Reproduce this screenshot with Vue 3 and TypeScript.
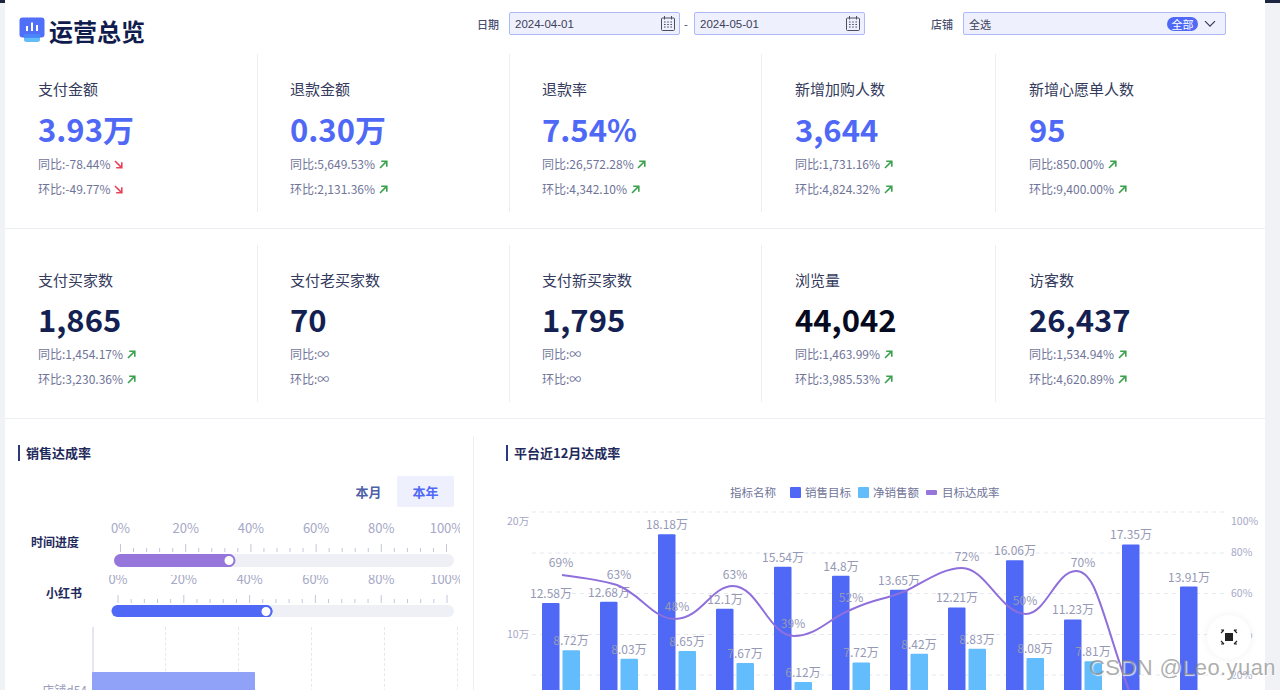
<script setup lang="ts">
interface Metric {
  title: string;
  value: string;
  yoy: string;
  mom: string;
  yoyDir?: "up" | "down";
  momDir?: "up" | "down";
  black?: boolean;
}

const rowOne: Metric[] = [
  { title: "支付金额", value: "3.93万", yoy: "-78.44%", mom: "-49.77%", yoyDir: "down", momDir: "down" },
  { title: "退款金额", value: "0.30万", yoy: "5,649.53%", mom: "2,131.36%", yoyDir: "up", momDir: "up" },
  { title: "退款率", value: "7.54%", yoy: "26,572.28%", mom: "4,342.10%", yoyDir: "up", momDir: "up" },
  { title: "新增加购人数", value: "3,644", yoy: "1,731.16%", mom: "4,824.32%", yoyDir: "up", momDir: "up" },
  { title: "新增心愿单人数", value: "95", yoy: "850.00%", mom: "9,400.00%", yoyDir: "up", momDir: "up" },
];

const rowTwo: Metric[] = [
  { title: "支付买家数", value: "1,865", yoy: "1,454.17%", mom: "3,230.36%", yoyDir: "up", momDir: "up" },
  { title: "支付老买家数", value: "70", yoy: "∞", mom: "∞" },
  { title: "支付新买家数", value: "1,795", yoy: "∞", mom: "∞" },
  { title: "浏览量", value: "44,042", yoy: "1,463.99%", mom: "3,985.53%", yoyDir: "up", momDir: "up", black: true },
  { title: "访客数", value: "26,437", yoy: "1,534.94%", mom: "4,620.89%", yoyDir: "up", momDir: "up" },
];

const rows = [rowOne, rowTwo];

// left gauges, coordinates are local to each svg
const gaugeLabels = ["0%", "20%", "40%", "60%", "80%", "100%"];
const gauges = [
  { name: "时间进度", cls: "gauge-time", x0: 20.5, step: 65.2, trackX: 14, fill: 121, knob: 129, color: "#9776dc", labelY: 13, tickY: 24, barY: 34, barH: 13, h: 48 },
  { name: "小红书", cls: "gauge-red", x0: 18, step: 65.8, trackX: 11.5, fill: 161, knob: 166, color: "#4f69f6", labelY: 9, tickY: 20, barY: 30, barH: 12, h: 42 },
];

function ticks(x0: number, step: number) {
  const out: { x: number; major: boolean }[] = [];
  for (let i = 0; i <= 25; i++) {
    out.push({ x: x0 + (i * step) / 5, major: i % 5 === 0 });
  }
  return out;
}

// right chart
const baseY = 756;
const perWan = 12.25;
const target = [12.58, 12.68, 18.18, 12.1, 15.54, 14.8, 13.65, 12.21, 16.06, 11.23, 17.35, 13.91];
const sales = [8.72, 8.03, 8.65, 7.67, 6.12, 7.72, 8.42, 8.83, 8.08, 7.81, 0, 0];
const groups = target.map((t, i) => {
  const x = 541 + i * 58;
  return { x, t, s: sales[i], ty: baseY - t * perWan, sy: baseY - sales[i] * perWan };
});
const gridY = [511, 552, 592.5, 633.5, 674];
const rates = [
  { t: "69%", x: 560, y: 566 },
  { t: "63%", x: 618, y: 578 },
  { t: "48%", x: 676, y: 610 },
  { t: "63%", x: 734, y: 578 },
  { t: "39%", x: 792, y: 627 },
  { t: "52%", x: 850, y: 601 },
  { t: "72%", x: 966, y: 560 },
  { t: "50%", x: 1024, y: 604 },
  { t: "70%", x: 1082, y: 566 },
];
const linePath =
  "M561,574 C585,577 603,580 616,584 C640,593 652,618 674,618 C700,618 710,585 732,585 C757,585 768,635 793,635 C815,635 828,618 847,610 C860,604 872,600 880,598 C888,596 897,593 905,590 C925,580 942,567 961,567 C985,567 1000,613 1025,613 C1045,613 1055,570 1075,570 C1095,570 1100,610 1128,690 L1140,730";
</script>

<template>
  <div class="page">
    <i class="corner corner-left"></i>
    <i class="corner corner-right"></i>

    <header class="topbar">
      <div class="brand">
        <svg class="brand-icon" width="26" height="26" viewBox="0 0 26 26">
          <rect x="5" y="14" width="16" height="11" rx="2.5" fill="#63bcfb" />
          <rect x="0.5" y="0.5" width="25" height="20" rx="3" fill="#4f6ff8" />
          <rect x="5" y="17" width="16" height="3.5" fill="#4a86f8" />
          <rect x="7" y="9" width="2" height="5" fill="#fff" />
          <rect x="12" y="5.5" width="2" height="8.5" fill="#fff" />
          <rect x="17" y="8" width="2" height="6" fill="#fff" />
        </svg>
        <span>运营总览</span>
      </div>

      <div class="filter date-filter">
        <label>日期</label>
        <div class="field date-field" v-for="(d, i) in ['2024-04-01', '2024-05-01']" :key="d" :class="{ second: i === 1 }">
          <span>{{ d }}</span>
          <svg width="14" height="15" viewBox="0 0 14 15" fill="none" stroke="#4a4f5e">
            <rect x="0.5" y="2" width="13" height="12.5" rx="1" />
            <path d="M3.5 0v3.5M10.5 0v3.5" />
            <path d="M3 6h1.6M6.2 6h1.6M9.4 6h1.6M3 8.5h1.6M6.2 8.5h1.6M9.4 8.5h1.6M3 11h1.6M6.2 11h1.6M9.4 11h1.6" stroke-width="1.2" />
          </svg>
        </div>
      </div>

      <div class="filter shop-filter">
        <label>店铺</label>
        <div class="field shop-field">
          <span class="shop-value">全选</span>
          <span class="tag">全部</span>
          <svg width="12" height="8" viewBox="0 0 12 8" fill="none" stroke="#333a5c" stroke-width="1.2">
            <path d="M1 1.2l5 5 5-5" />
          </svg>
        </div>
      </div>
    </header>

    <section v-for="(row, r) in rows" :key="r" class="metrics" :class="r === 0 ? 'metrics-one' : 'metrics-two'">
      <div v-for="m in row" :key="m.title" class="metric">
        <div class="metric-title">{{ m.title }}</div>
        <div class="metric-value" :class="{ blackish: m.black }">{{ m.value }}</div>
        <div class="metric-sub">
          同比:{{ m.yoy }}
          <svg v-if="m.yoyDir" class="arrow" :class="m.yoyDir" width="9" height="9" viewBox="0 0 9 9" fill="none" stroke-width="1.6">
            <path v-if="m.yoyDir === 'up'" d="M1 8L7.6 1.4M2.2 1.2h5.6v5.6" />
            <path v-else d="M1 1l6.6 6.6M2.2 7.8h5.6V2.2" />
          </svg>
        </div>
        <div class="metric-sub">
          环比:{{ m.mom }}
          <svg v-if="m.momDir" class="arrow" :class="m.momDir" width="9" height="9" viewBox="0 0 9 9" fill="none" stroke-width="1.6">
            <path v-if="m.momDir === 'up'" d="M1 8L7.6 1.4M2.2 1.2h5.6v5.6" />
            <path v-else d="M1 1l6.6 6.6M2.2 7.8h5.6V2.2" />
          </svg>
        </div>
      </div>
    </section>

    <section class="bottom">
      <div class="panel-left">
        <h3 class="panel-title">销售达成率</h3>
        <div class="tabs">
          <span class="tab">本月</span>
          <span class="tab active">本年</span>
        </div>

        <div v-for="g in gauges" :key="g.name" class="gauge" :class="g.cls">
          <span class="gauge-name">{{ g.name }}</span>
          <svg width="360" :height="g.h">
            <text v-for="(l, i) in gaugeLabels" :key="l" :x="g.x0 + i * g.step" :y="g.labelY" text-anchor="middle" class="gauge-label">{{ l }}</text>
            <line
              v-for="t in ticks(g.x0, g.step)"
              :key="t.x"
              :x1="t.x"
              :x2="t.x"
              :y1="t.major ? g.tickY : g.tickY + 4"
              :y2="g.tickY + 8"
              stroke="#c4c6d8"
            />
            <rect :x="g.trackX" :y="g.barY" :width="354 - g.trackX" :height="g.barH" :rx="g.barH / 2" fill="#eff0f5" />
            <rect :x="g.trackX" :y="g.barY" :width="g.fill" :height="g.barH" :rx="g.barH / 2" :fill="g.color" />
            <circle :cx="g.knob" :cy="g.barY + 6.5" r="5.5" fill="#fff" :stroke="g.color" stroke-width="2" />
          </svg>
        </div>

        <div class="rank">
          <i v-for="n in 5" :key="n" class="rank-grid"></i>
          <div class="rank-row">
            <span class="rank-name">店铺d54</span>
            <span class="rank-bar"></span>
          </div>
        </div>
      </div>

      <div class="panel-right">
        <h3 class="panel-title">平台近12月达成率</h3>
        <svg class="combo" width="792" height="255" viewBox="473 435 792 255">
          <text x="729" y="496" class="legend">指标名称</text>
          <rect x="789" y="486" width="11" height="11" rx="1" fill="#4f69f6" />
          <text x="804" y="496" class="legend">销售目标</text>
          <rect x="857" y="486" width="11" height="11" rx="1" fill="#63bcfb" />
          <text x="872" y="496" class="legend">净销售额</text>
          <rect x="925" y="489" width="11" height="5" rx="1" fill="#9776dc" />
          <text x="941" y="496" class="legend">目标达成率</text>

          <line v-for="y in gridY" :key="y" x1="531" x2="1226" :y1="y" :y2="y" stroke="#e6e8f0" stroke-dasharray="4 4" />

          <text x="506" y="524" class="axis">20万</text>
          <text x="506" y="637" class="axis">10万</text>
          <text x="1230" y="524" class="axis">100%</text>
          <text x="1230" y="555" class="axis">80%</text>
          <text x="1230" y="596" class="axis">60%</text>
          <text x="1230" y="637" class="axis">40%</text>
          <text x="1230" y="678" class="axis">20%</text>

          <g v-for="g in groups" :key="g.x">
            <rect :x="g.x" :y="g.ty" width="17.5" :height="baseY - g.ty" rx="1" fill="#4f69f6" />
            <rect v-if="g.s" :x="g.x + 20.5" :y="g.sy" width="17.5" :height="baseY - g.sy" rx="1" fill="#63bcfb" />
            <text :x="g.x + 9" :y="g.ty - 5" text-anchor="middle" class="bar-label">{{ g.t }}万</text>
            <text v-if="g.s" :x="g.x + 29" :y="g.sy - 5" text-anchor="middle" class="bar-label">{{ g.s }}万</text>
          </g>

          <path :d="linePath" fill="none" stroke="#8f6fdc" stroke-width="2" />
          <text v-for="p in rates" :key="p.t + p.x" :x="p.x" :y="p.y" text-anchor="middle" class="bar-label">{{ p.t }}</text>
        </svg>
      </div>
    </section>

    <button class="float-btn" type="button">
      <svg width="18" height="18" viewBox="0 0 18 18" fill="none" stroke="#222" stroke-width="1.2">
        <rect x="5" y="5" width="8" height="8" fill="#222" stroke="none" />
        <path d="M1 5l3-3M1 2h3M17 5l-3-3M17 2h-3M1 13l3 3M1 16h3M17 13l-3 3M17 16h-3" />
      </svg>
    </button>
    <div class="watermark">CSDN @Leo.yuan</div>
  </div>
</template>

<style>
html,
body {
  margin: 0;
  background: #f1f2f6;
}
</style>

<style scoped>
.page {
  position: relative;
  box-sizing: border-box;
  width: 1280px;
  height: 690px;
  overflow: hidden;
  margin: 0;
  padding: 0 15px 0 5px;
  background: #f1f2f6;
  font-family: "Noto Sans CJK SC", "Noto Sans", sans-serif;
  color: #333a5c;
}

.corner {
  position: absolute;
  top: 0;
  height: 3px;
  background: #1d2540;
}
.corner-left {
  left: 0;
  width: 5px;
}
.corner-right {
  right: 0;
  width: 15px;
}

.topbar {
  display: flex;
  align-items: flex-start;
  height: 54px;
  background: #fff;
}

.brand {
  display: flex;
  align-items: center;
  width: 472px;
  height: 26px;
  margin-top: 17px;
  padding-left: 14px;
  box-sizing: border-box;
  font-size: 24px;
  font-weight: 700;
  color: #111c4e;
}
.brand-icon {
  margin-right: 4px;
}

.filter {
  display: flex;
  align-items: center;
  margin-top: 12px;
  height: 23px;
}
.filter label {
  font-size: 11px;
  font-weight: 500;
  color: #4a4f72;
  margin-right: 10px;
}

.field {
  display: flex;
  align-items: center;
  box-sizing: border-box;
  height: 23px;
  background: #eef0fd;
  border: 1px solid #adb9f9;
  border-radius: 2px;
  font-size: 11.5px;
  color: #3c4058;
}

.date-field {
  justify-content: space-between;
  width: 171px;
  padding: 0 4px 0 5px;
  font-family: "Liberation Sans", sans-serif;
}
.date-field.second {
  margin-left: 14px;
  position: relative;
}
.date-field.second::before {
  content: "-";
  position: absolute;
  left: -11px;
  color: #4a4f72;
}

.shop-filter {
  margin-left: 66px;
}
.shop-field {
  width: 263px;
  padding: 0 9px 0 5px;
}
.shop-value {
  flex: 1;
  font-size: 11px;
}
.tag {
  width: 31px;
  height: 14px;
  line-height: 14px;
  border-radius: 7px;
  background: #4f69f6;
  color: #fff;
  font-size: 11px;
  text-align: center;
  margin-right: 6px;
}

.metrics {
  display: grid;
  grid-template-columns: 253px 252px 252px 234px 1fr;
  background: #fff;
  border-bottom: 1px solid #eceef4;
  padding-bottom: 16px;
}
.metrics-two {
  padding-top: 16px;
}

.metric {
  box-sizing: border-box;
  height: 158px;
  padding: 25px 0 0 33px;
  border-right: 1px solid #eceef4;
}
.metrics-two .metric {
  height: 157px;
}
.metric:nth-child(2),
.metric:nth-child(3) {
  padding-left: 32px;
}
.metric:last-child {
  border-right: none;
}

.metric-title {
  height: 20px;
  line-height: 20px;
  font-size: 15px;
  color: #333a5c;
}
.metric-value {
  height: 44px;
  line-height: 44px;
  margin-top: 8px;
  font-size: 31px;
  font-weight: 700;
  color: #4f69f6;
}
.metrics-two .metric-value {
  color: #141f52;
  margin-top: 7px;
}
.metrics-two .metric-value.blackish {
  color: #050a20;
}
.metric-sub {
  height: 25px;
  line-height: 25px;
  font-size: 12px;
  color: #6f7499;
  white-space: nowrap;
}
.arrow {
  margin-left: 1px;
}
.arrow.up {
  stroke: #3aa14c;
}
.arrow.down {
  stroke: #e8425a;
}

.bottom {
  display: flex;
  height: 271px;
  background: #fff;
}

.panel-left {
  position: relative;
  box-sizing: border-box;
  width: 469px;
  margin-top: 17px;
  border-right: 1px solid #eeeff5;
  padding-left: 13px;
}
.panel-right {
  position: relative;
  flex: 1;
  margin-top: 17px;
  padding-left: 32px;
}

.panel-title {
  margin: 9px 0 0;
  height: 16px;
  line-height: 16px;
  padding-left: 6px;
  border-left: 2px solid #2b3a80;
  font-size: 13px;
  font-weight: 700;
  color: #1f2a5c;
}

.tabs {
  display: flex;
  justify-content: flex-end;
  align-items: center;
  margin: 15px 19px 0 0;
  height: 31px;
}
.tab {
  box-sizing: border-box;
  width: 57px;
  height: 31px;
  line-height: 31px;
  text-align: center;
  font-size: 13px;
  font-weight: 700;
  color: #4f5fa8;
  border-radius: 2px;
}
.tab.active {
  background: #eef0fd;
  color: #4f69f6;
}

.gauge {
  display: flex;
}
.gauge-time {
  margin-top: 13px;
  height: 48px;
}
.gauge-red {
  margin-top: 7px;
  height: 42px;
}
.gauge-name {
  width: 69px;
  flex: none;
  text-align: right;
  padding-right: 8px;
  box-sizing: border-box;
  font-size: 12px;
  font-weight: 700;
  color: #1f2a5c;
}
.gauge-time .gauge-name {
  padding-top: 13px;
}
.gauge-red .gauge-name {
  padding-top: 9px;
  padding-right: 5px;
}
.gauge-time svg {
  margin-left: 13px;
}
.gauge-red svg {
  margin-left: 13px;
}
.gauge svg {
  display: block;
  overflow: hidden;
}
.gauge-label {
  font-size: 13px;
  fill: #a5a8c6;
}

.rank {
  position: relative;
  margin: 10px 0 0 74px;
  height: 70px;
  border-left: 2px solid #e5e6f0;
  background-image: repeating-linear-gradient(90deg, transparent 0 71px, transparent 71px);
}
.rank-grid {
  position: absolute;
  top: 0;
  bottom: 0;
  border-left: 1px dashed #e6e8f0;
}
.rank-grid:nth-child(1) {
  left: 71px;
}
.rank-grid:nth-child(2) {
  left: 144px;
}
.rank-grid:nth-child(3) {
  left: 217px;
}
.rank-grid:nth-child(4) {
  left: 290px;
}
.rank-grid:nth-child(5) {
  left: 363px;
}
.rank-row {
  position: absolute;
  left: -2px;
  top: 45px;
  height: 40px;
}
.rank-bar {
  display: block;
  width: 163px;
  height: 40px;
  background: #8fa2f8;
  border-radius: 1px 1px 0 0;
}
.rank-name {
  position: absolute;
  right: 168px;
  top: 9px;
  white-space: nowrap;
  font-size: 12px;
  color: #9a9dbb;
}

.combo {
  position: absolute;
  left: 0;
  top: 0;
}
.panel-right .panel-title {
  position: relative;
  z-index: 1;
}
.legend {
  font-size: 11.5px;
  fill: #6f7499;
}
.axis {
  font-size: 10.5px;
  fill: #a5a8c6;
}
.bar-label {
  font-size: 12px;
  fill: #9699b6;
}

.float-btn {
  position: absolute;
  left: 1207px;
  top: 615px;
  width: 44px;
  height: 44px;
  display: flex;
  align-items: center;
  justify-content: center;
  padding: 0;
  border: none;
  border-radius: 50%;
  background: #fff;
  box-shadow: 0 0 8px rgba(30, 40, 90, 0.06);
}

.watermark {
  position: absolute;
  left: 1089px;
  top: 654px;
  font-family: "Liberation Sans", sans-serif;
  font-size: 22px;
  line-height: 28px;
  letter-spacing: 0.4px;
  white-space: nowrap;
  color: rgba(120, 120, 120, 0.6);
  text-shadow: 1px 1px 1px rgba(255, 255, 255, 0.8);
}
</style>
